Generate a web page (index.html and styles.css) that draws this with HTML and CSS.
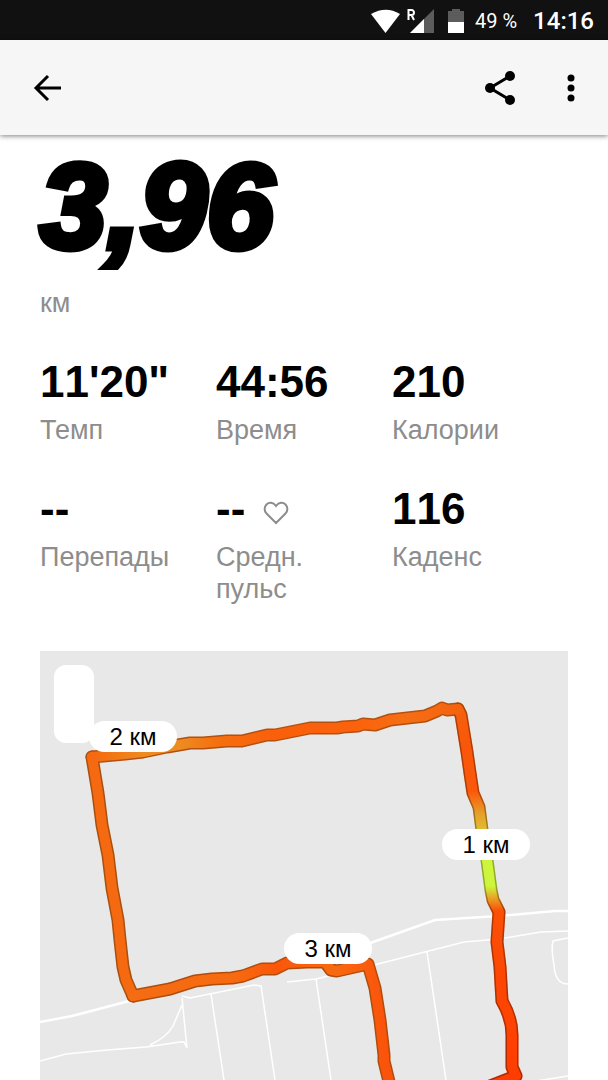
FILE: index.html
```html
<!DOCTYPE html>
<html lang="ru">
<head>
  <meta charset="UTF-8" />
  <meta name="viewport" content="width=device-width, initial-scale=1.0" />
  <title>Пробежка</title>
  <link rel="stylesheet" href="styles.css">
</head>
<body>

  <div class="status-bar">
    <svg class="status-icons" width="94" height="26" viewBox="0 0 94 26">
      <path d="M0 6Q15-2.500 29 6L14.500 25z" fill="#fff" />
      <path d="M63 1v24H39z" fill="#5c5c5c" />
      <path d="M53 11v14H39z" fill="#fff" />
      <path d="M37.500 12V2h3a2.400 2.400 0 0 1 0 5h-3m3 0l2.500 5" fill="none" stroke="#fff" stroke-width="2" />
      <path d="M77 3h4V1h8v2h4v11H77z" fill="#5c5c5c" />
      <path d="M77 14h16v11H77z" fill="#fff" />
    </svg>
    <span class="battery">49 %</span>
    <span class="clock">14:16</span>
  </div>

  <header class="toolbar">
    <button class="icon-btn" aria-label="Назад">
      <svg width="28" height="28" viewBox="0 0 28 28" fill="none" stroke="#000" stroke-width="3">
        <path d="M28 14H3M15 2L3 14L15 26" />
      </svg>
    </button>
    <button class="icon-btn share" aria-label="Поделиться">
      <svg width="32" height="36" viewBox="0 0 32 36">
        <path d="M26 6L6 18l20 12" fill="none" stroke="#000" stroke-width="3" />
        <circle cx="26" cy="6" r="5" />
        <circle cx="6" cy="18" r="5" />
        <circle cx="26" cy="30" r="5" />
      </svg>
    </button>
    <button class="icon-btn" aria-label="Ещё">
      <svg width="8" height="28" viewBox="0 0 8 28">
        <circle cx="4" cy="4" r="3.500" />
        <circle cx="4" cy="14" r="3.500" />
        <circle cx="4" cy="24" r="3.500" />
      </svg>
    </button>
  </header>

  <main class="run">
    <h1 class="distance">3,96</h1>
    <p class="label">км</p>

    <div class="stats">
      <div class="stat">
        <h2>11'20"</h2>
        <p class="label">Темп</p>
      </div>
      <div class="stat">
        <h2>44:56</h2>
        <p class="label">Время</p>
      </div>
      <div class="stat">
        <h2>210</h2>
        <p class="label">Калории</p>
      </div>
      <div class="stat">
        <h2>--</h2>
        <p class="label">Перепады</p>
      </div>
      <div class="stat">
        <h2>--
          <svg class="heart" width="26" height="24" viewBox="0 0 26 24" fill="none" stroke="#8d8d8d" stroke-width="2">
            <path d="M13 22L3.500 12.500C1 10 1 6 3.500 3.500S10 1 13 5C16 1 20 1 22.500 3.500S25 10 22.500 12.500z" />
          </svg>
        </h2>
        <p class="label">Средн.<br>пульс</p>
      </div>
      <div class="stat">
        <h2>116</h2>
        <p class="label">Каденс</p>
      </div>
    </div>

    <div class="map">
      <svg class="map-art" viewBox="40 651 528 429" preserveAspectRatio="xMinYMin slice">
        <defs>
          <linearGradient id="east" gradientUnits="userSpaceOnUse" x1="0" y1="700" x2="0" y2="1080">
            <stop offset="0" stop-color="#f5630f" />
            <stop offset="0.120" stop-color="#fa560a" />
            <stop offset="0.240" stop-color="#fa580a" />
            <stop offset="0.300" stop-color="#e6a02a" />
            <stop offset="0.370" stop-color="#dfcf38" />
            <stop offset="0.420" stop-color="#cdf53c" />
            <stop offset="0.490" stop-color="#cdf53c" />
            <stop offset="0.520" stop-color="#e8a428" />
            <stop offset="0.555" stop-color="#fb4f06" />
            <stop offset="1" stop-color="#ff3c00" />
          </linearGradient>
          <linearGradient id="north" gradientUnits="userSpaceOnUse" x1="92" y1="0" x2="458" y2="0">
            <stop offset="0" stop-color="#f5690f" />
            <stop offset="0.140" stop-color="#ee8a20" />
            <stop offset="0.240" stop-color="#ec8c22" />
            <stop offset="0.340" stop-color="#f5700f" />
            <stop offset="0.500" stop-color="#fa5f0a" />
            <stop offset="0.720" stop-color="#fb620c" />
            <stop offset="0.850" stop-color="#f56e14" />
            <stop offset="1" stop-color="#f5630f" />
          </linearGradient>
          <linearGradient id="south" gradientUnits="userSpaceOnUse" x1="133" y1="0" x2="390" y2="0">
            <stop offset="0" stop-color="#f56c12" />
            <stop offset="0.400" stop-color="#f76a10" />
            <stop offset="0.560" stop-color="#fb560a" />
            <stop offset="0.780" stop-color="#f76a10" />
            <stop offset="1" stop-color="#fa520a" />
          </linearGradient>

          <path id="route-east" d="M458 709L461 715L467 752L470 773L473 793L479 807L482 830L487 860L491 890L493 900L499 912L497 942L500 967L502 1001Q512 1018 512 1035L512 1067L516 1076L490 1086" />
          <path id="route-north" d="M92 757L125 754L143 752L167 747L190 743L203 743L227 741L242 741L267 735L275 735L310 728L337 728L343 727L358 726L363 724L375 725L390 720L425 716L437 711L442 708L447 710L458 709" />
          <path id="route-west" d="M92 757L98 793L102 825L108 855L112 888L118 920L120 940L123 967L126 980L133 996" />
          <path id="route-south" d="M133 996L170 989L195 981L212 979L232 978L243 976L262 969L275 969L287 963L307 962L325 962L331 970L337 971L368 964L375 988L380 1020L384 1055L384 1061L391 1090" />
        </defs>

        <!-- streets -->
        <g fill="none" stroke="#fff" stroke-width="1.500">
          <path stroke-width="2.500" d="M40 1022L72 1016L133 1000M340 955L373 942L435 920L499 916L555 911L568 911" />
          <path d="M40 1061L66 1054L107 1050L146 1047L180 1042L184 1042L187 1048L182 998M150 1045Q167 1037 173 1026L182 1005M182 996L190 998L254 985L261 986L275 1080" />
          <path d="M211 994L224 1080M287 982L316 979L378 964L464 942L499 939L541 932L568 931M316 979L331 1080M427 952L446 1080M568 938L553 941Q551 948 554 965Q555 984 568 984M505 1086L568 1076" />
        </g>

        <!-- coloured by pace -->
        <g class="route-edge">
          <use href="#route-west" stroke="#a8500f" />
          <use href="#route-north" stroke="#b3500f" />
          <use href="#route-east" stroke="url(#east)" />
          <use href="#route-east" stroke="#000" opacity="0.300" />
          <use href="#route-south" stroke="#b04c0c" />
        </g>
        <g class="route-line">
          <use href="#route-east" stroke="url(#east)" />
          <use href="#route-north" stroke="url(#north)" />
          <use href="#route-west" stroke="#f56a10" />
          <use href="#route-south" stroke="url(#south)" />
        </g>
      </svg>
      <div class="map-box"></div>
      <span class="pin pin-1">1 км</span>
      <span class="pin pin-2">2 км</span>
      <span class="pin pin-3">3 км</span>
    </div>
  </main>

</body>
</html>
```
FILE: styles.css
```css
* { box-sizing: border-box; }
body {
  margin: 0;
  height: 100vh;
  display: flex;
  flex-direction: column;
  overflow: hidden;
  background-color: #fff;
  color: #000;
  font-family: "Liberation Sans", Arial, sans-serif;
}
h1, h2, p { margin: 0; }
.status-bar {
  height: 40px;
  flex-shrink: 0;
  display: flex;
  align-items: center;
  justify-content: flex-end;
  padding: 2px 14px 0 0;
  background-color: #111;
  color: #fff;
  font-family: Roboto, sans-serif;
}
.status-icons { margin-right: 10px; }
.battery { font-size: 20px; margin-right: 16px; }
.clock { font-size: 24px; font-weight: 500; }
.toolbar {
  height: 95px;
  flex-shrink: 0;
  display: flex;
  align-items: center;
  padding: 0 33px;
  background-color: #f6f6f6;
  box-shadow: 0 1px 5px rgba(0, 0, 0, 0.5);
}
.icon-btn {
  display: flex;
  padding: 0;
  border: none;
  background: none;
  cursor: pointer;
}
.share { margin-left: auto; margin-right: 51px; }
.run {
  flex: 1;
  min-height: 0;
  display: flex;
  flex-direction: column;
  padding: 0 40px;
}
.distance {
  margin: 11px 0 21px;
  font-size: 120px;
  font-weight: bold;
  font-style: italic;
  line-height: 120px;
  -webkit-text-stroke: 7px #000;
}
.label {
  font-size: 27px;
  line-height: 32px;
  color: #8d8d8d;
}
.stats {
  display: grid;
  grid-template-columns: repeat(3, 1fr);
  row-gap: 39px;
  margin: 39px 0 46px;
}
.stat h2 {
  display: flex;
  align-items: center;
  height: 48px;
  margin-bottom: 8px;
  font-size: 44px;
  font-kerning: none;
}
.heart { margin: 8px 0 0 18px; }
.map {
  flex: 1;
  min-height: 0;
  position: relative;
  overflow: hidden;
  background-color: #e8e8e8;
}
.map-art { display: block; width: 100%; height: 100%; }
.route-edge, .route-line {
  fill: none;
  stroke-width: 13px;
  stroke-linecap: round;
  stroke-linejoin: round;
}
.route-line { stroke-width: 10px; }
.map-box {
  position: absolute;
  left: 14px;
  top: 14px;
  width: 40px;
  height: 78px;
  border-radius: 12px;
  background-color: #fff;
}
.pin {
  position: absolute;
  width: 88px;
  height: 31px;
  border-radius: 16px;
  background-color: #fff;
  font-size: 24px;
  line-height: 32px;
  text-align: center;
}
.pin-1 { left: 402px; top: 178px; }
.pin-2 { left: 49px; top: 70px; }
.pin-3 { left: 244px; top: 282px; }
```
